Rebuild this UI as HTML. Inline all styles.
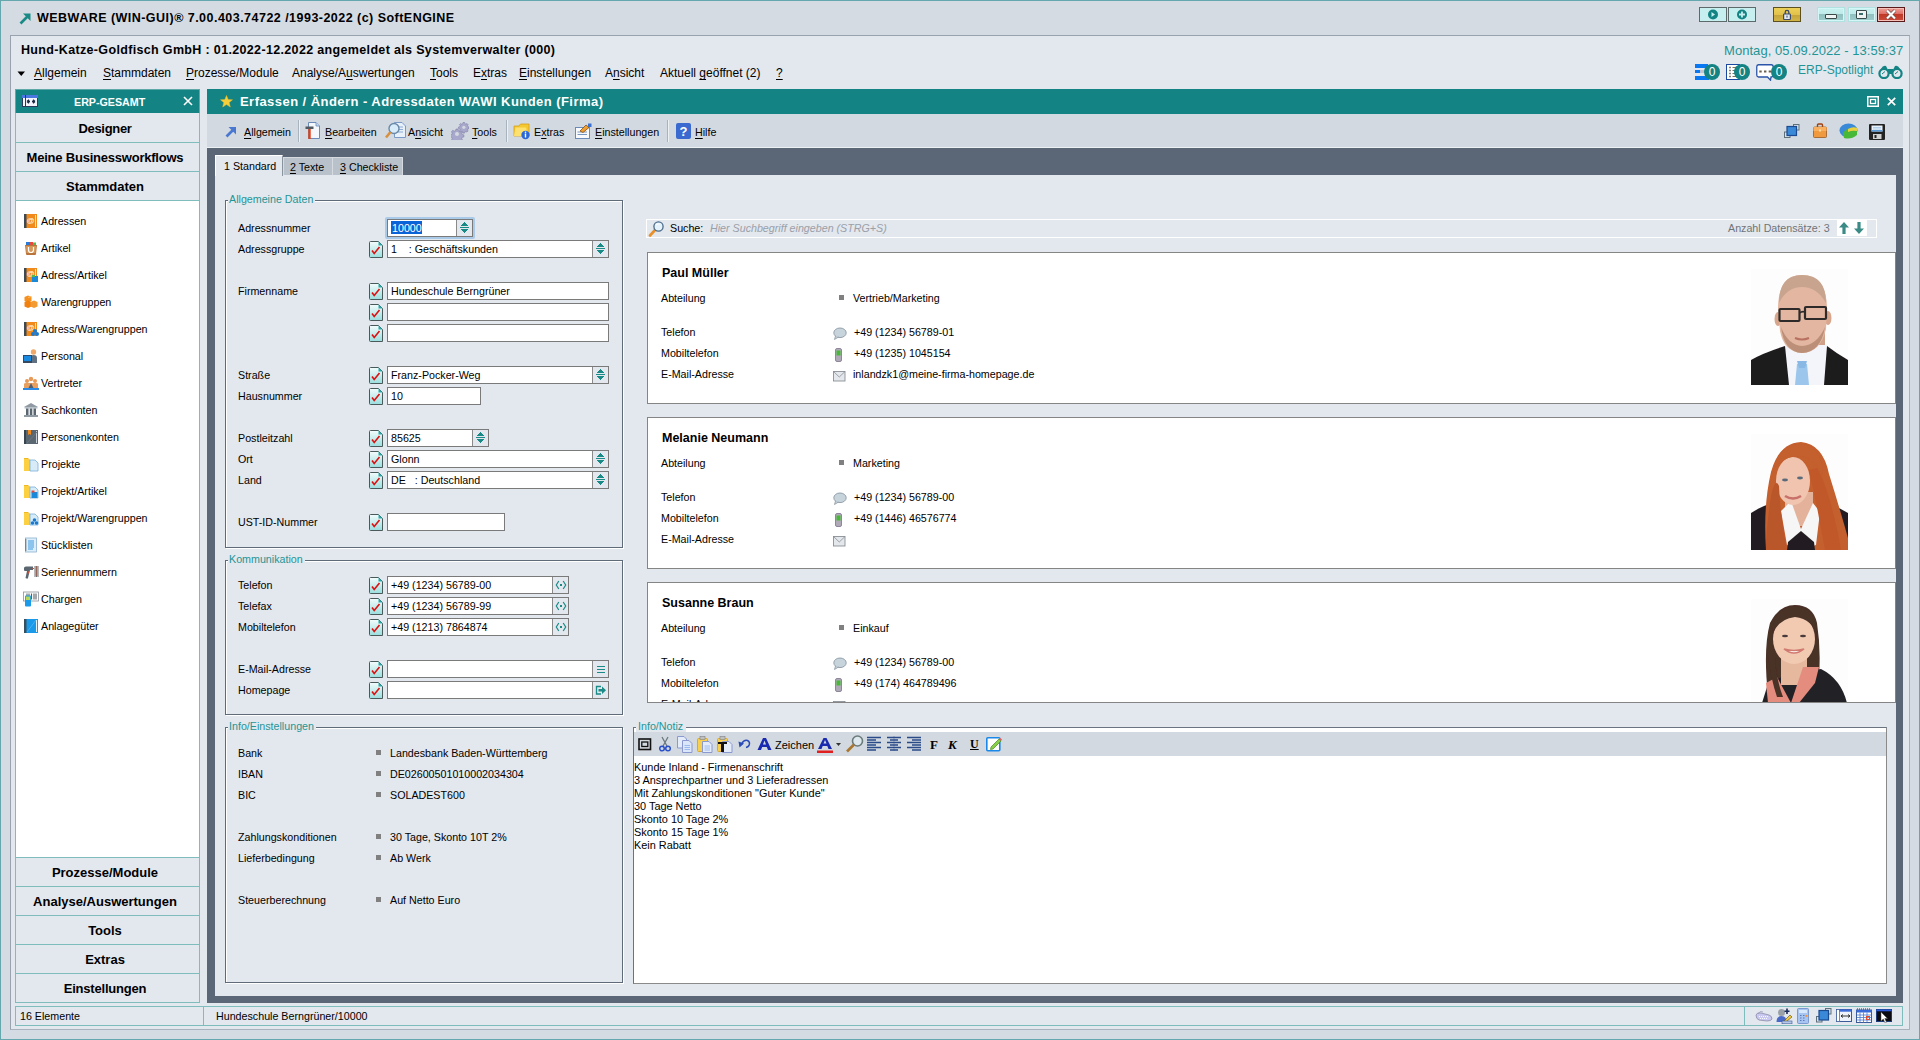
<!DOCTYPE html>
<html><head><meta charset="utf-8">
<style>
*{box-sizing:border-box;margin:0;padding:0}
html,body{width:1920px;height:1040px;overflow:hidden}
body{position:relative;background:#d5dbe2;font-family:"Liberation Sans",sans-serif;font-size:10.7px;color:#000}
.a{position:absolute;white-space:nowrap;line-height:1}
u{text-decoration:underline;text-underline-offset:1.5px;text-decoration-thickness:1px}
.teal{background:#138383}
.wb{position:absolute;top:7px;width:28px;height:15px;border:1px solid #5d6a6c}
.pbtn{position:absolute;left:15px;width:185px;height:29px;border-left:1px solid #7fbcbc;border-right:1px solid #7fbcbc;border-bottom:1px solid #7fbcbc;background:#e3e7ee;font-weight:bold;font-size:13px;text-align:center}
.pbtn span{position:absolute;left:0;right:5px;top:8px;line-height:1}
.badge{position:absolute;width:16px;height:16px;border-radius:8px;background:#138383;color:#fff;font-size:12px;text-align:center;line-height:16px}
.inp{position:absolute;height:18px;border:1px solid #7a7a7a;background:#fff}
.leg{color:#1f9595}
</style></head><body>

<!-- outer teal border -->
<div class="a" style="left:0;top:0;width:1920px;height:1040px;border:1px solid #64a7ad"></div>

<!-- title bar -->
<svg class="a" style="left:19px;top:12px" width="13" height="13" viewBox="0 0 13 13"><path d="M1.5 11.5 L9 4" stroke="#1a8a86" stroke-width="2.6" fill="none"/><path d="M4 1.5 H11.5 V9 Z" fill="#1a8a86"/></svg>
<div class="a" style="left:37px;top:12px;font-weight:bold;font-size:12.5px;letter-spacing:0.47px">WEBWARE (WIN-GUI)® 7.00.403.74722 /1993-2022 (c) SoftENGINE</div>

<!-- window buttons -->
<div class="wb" style="left:1699px;background:#c8efef"><svg width="26" height="13" style="position:absolute;left:0;top:0"><circle cx="13" cy="6.5" r="5" fill="#138383"/><path d="M11.5 4 L15 6.5 L11.5 9 Z" fill="#c8efef"/></svg></div>
<div class="wb" style="left:1728px;background:#c8efef"><svg width="26" height="13" style="position:absolute;left:0;top:0"><circle cx="13" cy="6.5" r="5" fill="#138383"/><path d="M10 6.5 H16 M13 3.5 V9.5" stroke="#c8efef" stroke-width="1.8"/></svg></div>
<div class="wb" style="left:1773px;width:28px;background:linear-gradient(#ecd058 0%,#e2c24a 50%,#c4a43a 51%,#d2b446 100%);border-color:#5c5020"><svg width="26" height="13" style="position:absolute;left:0;top:0"><path d="M11.2 6 V4.2 A1.8 1.8 0 0 1 14.8 4.2 V6" stroke="#3a4a6a" stroke-width="1.3" fill="none"/><rect x="9.6" y="6" width="6.8" height="5.5" rx="0.8" fill="#e4e8f0" stroke="#3a4a6a" stroke-width="1.2"/><rect x="12.5" y="7.6" width="1" height="2" fill="#3a4a6a"/></svg></div>
<div class="wb" style="left:1817px;background:linear-gradient(#c8f0f0 0%,#c0eaea 45%,#90c0c0 50%,#a0cccc 100%);border-color:#b0e2e2;box-shadow:inset 0 0 0 1px #d4f6f6"><div style="position:absolute;left:7px;top:6px;width:12px;height:5px;background:#eef4f4;border:1.2px solid #3a4848;border-radius:1px"></div></div>
<div class="wb" style="left:1848px;background:linear-gradient(#c8f0f0 0%,#c0eaea 45%,#90c0c0 50%,#a0cccc 100%);border-color:#b0e2e2;box-shadow:inset 0 0 0 1px #d4f6f6"><div style="position:absolute;left:7px;top:2px;width:11px;height:9px;border:1.5px solid #3a4a4a;background:#eef4f4;border-radius:1px"><div style="position:absolute;left:2px;top:2px;width:4px;height:2px;border:1px solid #3a6a6a"></div></div></div>
<div class="wb" style="left:1877px;background:linear-gradient(#eea098 0%,#de7068 45%,#c03828 50%,#cc4a3a 100%);border-color:#5a1a1a;box-shadow:inset 0 0 0 1px #f4c0b8"><svg width="26" height="13" style="position:absolute;left:0;top:0"><path d="M9 2.5 L17 10.5 M17 2.5 L9 10.5" stroke="#6a4a4a" stroke-width="3.4"/><path d="M9 2.5 L17 10.5 M17 2.5 L9 10.5" stroke="#fff" stroke-width="2.2"/></svg></div>

<!-- inner frame -->
<div class="a" style="left:10px;top:35px;width:1900px;height:995px;background:#e3e7ee;border:1px solid #98a3ae;border-right-color:#a9b3bd;border-bottom-color:#a9b3bd"></div>

<!-- company line -->
<div class="a" style="left:21px;top:44px;font-weight:bold;font-size:12.5px;letter-spacing:0.34px">Hund-Katze-Goldfisch GmbH : 01.2022-12.2022 angemeldet als Systemverwalter (000)</div>

<!-- menu -->
<svg class="a" style="left:17px;top:71px" width="9" height="6"><path d="M0.5 0.5 H8 L4.25 5 Z" fill="#000"/></svg>
<div class="a" style="left:34px;top:67px;font-size:12px"><u>A</u>llgemein</div>
<div class="a" style="left:103px;top:67px;font-size:12px"><u>S</u>tammdaten</div>
<div class="a" style="left:186px;top:67px;font-size:12px"><u>P</u>rozesse/Module</div>
<div class="a" style="left:292px;top:67px;font-size:12px">Analyse/A<u>u</u>swertungen</div>
<div class="a" style="left:430px;top:67px;font-size:12px"><u>T</u>ools</div>
<div class="a" style="left:473px;top:67px;font-size:12px">E<u>x</u>tras</div>
<div class="a" style="left:519px;top:67px;font-size:12px"><u>E</u>instellungen</div>
<div class="a" style="left:605px;top:67px;font-size:12px">A<u>n</u>sicht</div>
<div class="a" style="left:660px;top:67px;font-size:12px">Aktuell <u>g</u>eöffnet (2)</div>
<div class="a" style="left:776px;top:67px;font-size:12px"><u>?</u></div>

<!-- date + status icons -->
<div class="a" style="left:1724px;top:44px;font-size:13px;color:#1f9595;letter-spacing:0.05px">Montag, 05.09.2022 - 13:59:37</div>
<div class="a" style="left:1798px;top:64px;font-size:12px;color:#1f9595">ERP-Spotlight</div>
<svg class="a" style="left:1695px;top:64px" width="14" height="16" shape-rendering="crispEdges"><rect x="0" y="0" width="13" height="4" fill="#0a78f0"/><rect x="0" y="6" width="5" height="3" fill="#0a78f0"/><rect x="5" y="6" width="8" height="3" fill="#c0c4d0"/><rect x="0" y="12" width="14" height="4" fill="#0a78f0"/></svg>
<div class="badge" style="left:1704px;top:64px">0</div>
<svg class="a" style="left:1726px;top:64px" width="14" height="16"><rect x="0.5" y="0.5" width="13" height="15" fill="#fff" stroke="#1a48a0"/><path d="M3.5 3.5h1M3.5 6.5h1M3.5 9.5h1M3.5 12.5h1" stroke="#000" stroke-width="1.4"/><path d="M6.5 3.5h5M6.5 6.5h5M6.5 9.5h5M6.5 12.5h5" stroke="#807058" stroke-width="1"/></svg>
<div class="badge" style="left:1734px;top:64px">0</div>
<svg class="a" style="left:1756px;top:64px" width="18" height="17"><path d="M2.5 0.75 H15.5 A2 2 0 0 1 17.25 2.75 V11 A2 2 0 0 1 15.5 13 H15 L14.5 16.2 L11.5 13 H2.5 A2 2 0 0 1 0.75 11 V2.75 A2 2 0 0 1 2.5 0.75Z" fill="#fff" stroke="#2a55a8" stroke-width="1.3"/><path d="M3.3 7.5h2.4M8 7.5h2.4M12.7 7.5h2.4" stroke="#6a6050" stroke-width="2.2"/></svg>
<div class="badge" style="left:1771px;top:64px">0</div>
<svg class="a" style="left:1878px;top:65px" width="25" height="14"><circle cx="6" cy="8.5" r="4.6" fill="none" stroke="#138383" stroke-width="2.2"/><circle cx="19" cy="8.5" r="4.6" fill="none" stroke="#138383" stroke-width="2.2"/><path d="M3 4 Q5 0 8 1 L10 5 H15 L17 1 Q20 0 22 4" fill="#138383"/><rect x="10" y="5" width="5" height="4" fill="#138383"/><path d="M4 9 L7 6.5 M17 9 L20 6.5" stroke="#138383" stroke-width="1"/></svg>

<!-- left panel -->
<div class="a teal" style="left:15px;top:89px;width:185px;height:24px;box-shadow:inset 1px 1px 0 #5fa8a8,inset -1px 0 0 #5fa8a8"></div>
<svg class="a" style="left:22px;top:95px" width="16" height="12"><rect x="0.5" y="0.5" width="15" height="11" fill="#f4f4fc" stroke="#2a3a5a"/><rect x="0" y="0" width="16" height="3" fill="#4a78e0"/><path d="M3.5 0 V12" stroke="#2a3a5a" stroke-width="1"/><path d="M5 6.5 H8 M10 6.5 H13 M5 6.5 L7 4.8 M5 6.5 L7 8.2 M13 6.5 L11 4.8 M13 6.5 L11 8.2" stroke="#1a2a40" stroke-width="1.3"/></svg>
<div class="a" style="left:74px;top:97px;font-weight:bold;font-size:10.7px;color:#fff">ERP-GESAMT</div>
<svg class="a" style="left:183px;top:96px" width="10" height="10"><path d="M1 1 L9 9 M9 1 L1 9" stroke="#fff" stroke-width="1.6"/></svg>
<div class="a" style="left:15px;top:113px;width:185px;height:890px;background:#fff;border:1px solid #7fbcbc;border-top:none"></div>
<div class="pbtn" style="top:113px;height:30px"><span style="top:9px;letter-spacing:-0.3px">Designer</span></div>
<div class="pbtn" style="top:143px"><span style="letter-spacing:-0.22px">Meine Businessworkflows</span></div>
<div class="pbtn" style="top:172px"><span>Stammdaten</span></div>
<div class="pbtn" style="top:857px;height:30px;border-top:1px solid #7fbcbc"><span>Prozesse/Module</span></div>
<div class="pbtn" style="top:887px"><span>Analyse/Auswertungen</span></div>
<div class="pbtn" style="top:916px"><span>Tools</span></div>
<div class="pbtn" style="top:945px"><span>Extras</span></div>
<div class="pbtn" style="top:974px"><span style="letter-spacing:-0.2px">Einstellungen</span></div>
<svg class="a" style="left:23px;top:213px" width="16" height="16" viewBox="0 0 16 16"><rect x="1" y="1" width="13" height="14" fill="#f08a1c"/><rect x="1" y="1" width="2.5" height="14" fill="#3c4a55"/><rect x="12" y="2" width="1" height="12" fill="#fde0b8"/><text x="7.6" y="9.5" font-size="8" fill="#fff" text-anchor="middle" font-family="Liberation Sans">@</text></svg>
<div class="a" style="left:41px;top:216px">Adressen</div>
<svg class="a" style="left:23px;top:240px" width="16" height="16" viewBox="0 0 16 16"><path d="M2 5 L3 14 Q3 15 4 15 H12 Q13 15 13 14 L14 5 Z" fill="#b8743a"/><path d="M3 6 H13 L12.5 13 H3.5Z" fill="#d89858"/><rect x="3" y="2" width="4" height="3" fill="#2a7ad8"/><rect x="7" y="2" width="3" height="3" fill="#e84a3a"/><rect x="10" y="2.5" width="3" height="2.5" fill="#58b848"/><path d="M5.5 7 V10 A2.5 2.5 0 0 0 10.5 10 V7" stroke="#fff" stroke-width="1.2" fill="none"/></svg>
<div class="a" style="left:41px;top:243px">Artikel</div>
<svg class="a" style="left:23px;top:267px" width="16" height="16" viewBox="0 0 16 16"><rect x="1" y="1" width="13" height="14" fill="#f08a1c"/><rect x="1" y="1" width="2.5" height="14" fill="#3c4a55"/><rect x="12" y="2" width="1" height="7" fill="#fde0b8"/><text x="7.6" y="9" font-size="8" fill="#fff" text-anchor="middle" font-family="Liberation Sans">@</text><rect x="9" y="9" width="6" height="6" fill="#1a8ad8"/><rect x="9" y="8" width="3" height="2" fill="#58b848"/></svg>
<div class="a" style="left:41px;top:270px">Adress/Artikel</div>
<svg class="a" style="left:23px;top:294px" width="16" height="16" viewBox="0 0 16 16"><path d="M5 1.5 L8.5 3 V7 L5 8.5 L1.5 7 V3Z" fill="#f5901e"/><path d="M1.5 8 L5 6.5 L8.5 8 V12.5 L5 14 L1.5 12.5Z" fill="#f08010"/><path d="M7.5 8 L11 6.5 L14.5 8 V12.5 L11 14 L7.5 12.5Z" fill="#f39a30"/><path d="M5 3.5 L8.5 2.5" stroke="#ffb860" stroke-width="1"/></svg>
<div class="a" style="left:41px;top:297px">Warengruppen</div>
<svg class="a" style="left:23px;top:321px" width="16" height="16" viewBox="0 0 16 16"><rect x="1" y="1" width="13" height="14" fill="#f08a1c"/><rect x="1" y="1" width="2.5" height="14" fill="#3c4a55"/><rect x="12" y="2" width="1" height="7" fill="#fde0b8"/><text x="7.6" y="9" font-size="8" fill="#fff" text-anchor="middle" font-family="Liberation Sans">@</text><circle cx="12" cy="10" r="2" fill="#1a7ad0"/><circle cx="10" cy="13" r="2" fill="#1a7ad0"/><circle cx="14" cy="13" r="2" fill="#1a7ad0"/></svg>
<div class="a" style="left:41px;top:324px">Adress/Warengruppen</div>
<svg class="a" style="left:23px;top:348px" width="16" height="16" viewBox="0 0 16 16"><circle cx="10.5" cy="4" r="2.7" fill="#f0a868"/><path d="M7 15 V10 Q7 7 10.5 7 Q14 7 14 10 V15Z" fill="#607080"/><rect x="0.5" y="7.5" width="8" height="6" fill="#1a8ae0" stroke="#2a4a70" stroke-width="1"/><rect x="0" y="13.5" width="9" height="1.5" fill="#3a4a5a"/></svg>
<div class="a" style="left:41px;top:351px">Personal</div>
<svg class="a" style="left:23px;top:375px" width="16" height="16" viewBox="0 0 16 16"><circle cx="4" cy="6" r="2" fill="#e89a58"/><circle cx="8" cy="4" r="2.2" fill="#e89a58"/><circle cx="12" cy="6" r="2" fill="#e89a58"/><path d="M1 14 V9 Q1 8 3 8 H13 Q15 8 15 9 V14Z" fill="#e8a060"/><path d="M5 14 L8 8 L11 14Z" fill="#506070"/><rect x="0" y="13" width="16" height="2" fill="#2a8ae8"/></svg>
<div class="a" style="left:41px;top:378px">Vertreter</div>
<svg class="a" style="left:23px;top:402px" width="16" height="16" viewBox="0 0 16 16"><path d="M1 5 L8 1 L15 5Z" fill="#909aa2"/><rect x="1.5" y="5" width="13" height="1.5" fill="#b8c0c8"/><rect x="3" y="6.5" width="2.5" height="6.5" fill="#5a6670"/><rect x="6.8" y="6.5" width="2.5" height="6.5" fill="#5a6670"/><rect x="10.5" y="6.5" width="2.5" height="6.5" fill="#5a6670"/><rect x="1" y="13" width="14" height="2" fill="#909aa2"/></svg>
<div class="a" style="left:41px;top:405px">Sachkonten</div>
<svg class="a" style="left:23px;top:429px" width="16" height="16" viewBox="0 0 16 16"><rect x="1" y="1" width="14" height="14" fill="#5a6670"/><rect x="1" y="1" width="2" height="14" fill="#38444e"/><path d="M5 1 H8 V6 L6.5 5 L5 6Z" fill="#f08a1c"/><rect x="13" y="2" width="1" height="12" fill="#c8d0d8"/><path d="M4 14 L14 3" stroke="#6a7680" stroke-width="1"/></svg>
<div class="a" style="left:41px;top:432px">Personenkonten</div>
<svg class="a" style="left:23px;top:456px" width="16" height="16" viewBox="0 0 16 16"><path d="M1 2 H5 L6 3 V15 H1Z" fill="#f0b820"/><path d="M1 3 H7 V15 H1Z" fill="#fcd040"/><path d="M7 4 H12 L15 7 V15 H7Z" fill="#d8ecf8" stroke="#7ab0d8" stroke-width="0.8"/></svg>
<div class="a" style="left:41px;top:459px">Projekte</div>
<svg class="a" style="left:23px;top:483px" width="16" height="16" viewBox="0 0 16 16"><path d="M1 2 H5 L6 3 V15 H1Z" fill="#f0b820"/><path d="M1 3 H7 V15 H1Z" fill="#fcd040"/><path d="M7 4 H12 L15 7 V15 H7Z" fill="#d8ecf8" stroke="#7ab0d8" stroke-width="0.8"/><rect x="8.5" y="9" width="6" height="6" fill="#1a8ad8"/><rect x="8.5" y="7.5" width="3" height="2" fill="#e84a3a"/></svg>
<div class="a" style="left:41px;top:486px">Projekt/Artikel</div>
<svg class="a" style="left:23px;top:510px" width="16" height="16" viewBox="0 0 16 16"><path d="M1 2 H5 L6 3 V15 H1Z" fill="#f0b820"/><path d="M1 3 H7 V15 H1Z" fill="#fcd040"/><path d="M7 4 H12 L15 7 V15 H7Z" fill="#d8ecf8" stroke="#7ab0d8" stroke-width="0.8"/><circle cx="11.5" cy="10" r="1.8" fill="#1a7ad0"/><circle cx="9.5" cy="13" r="1.8" fill="#1a7ad0"/><circle cx="13.5" cy="13" r="1.8" fill="#1a7ad0"/></svg>
<div class="a" style="left:41px;top:513px">Projekt/Warengruppen</div>
<svg class="a" style="left:23px;top:537px" width="16" height="16" viewBox="0 0 16 16"><rect x="2.5" y="1" width="11" height="14" fill="#dceefa" stroke="#8ab0d0" stroke-width="0.8"/><path d="M5 4 H11 M5 6 H11 M5 8 H11 M5 10 H11 M5 12 H10" stroke="#3a9ae0" stroke-width="1"/><path d="M2 3h1.5M2 5h1.5M2 7h1.5M2 9h1.5M2 11h1.5M2 13h1.5" stroke="#333" stroke-width="0.8"/></svg>
<div class="a" style="left:41px;top:540px">Stücklisten</div>
<svg class="a" style="left:23px;top:564px" width="16" height="16" viewBox="0 0 16 16"><path d="M1 4 Q1 2.5 3 2.5 H10 V6 H7 L5 14 Q4.5 15 3.5 14.5 L2.5 14 L4 7 H2 Q1 7 1 6Z" fill="#5a6670"/><path d="M9.5 4.5 H11" stroke="#e84a2a" stroke-width="1"/><path d="M5 10 L6 7" stroke="#e84a2a" stroke-width="0.8"/><path d="M12 2V13M13.5 2V13M15 2V13" stroke="#333" stroke-width="0.7"/><path d="M12 3h3M12 5h3M12 7h3M12 9h3M12 11h3" stroke="#e84a2a" stroke-width="0.6"/></svg>
<div class="a" style="left:41px;top:567px">Seriennummern</div>
<svg class="a" style="left:23px;top:591px" width="16" height="16" viewBox="0 0 16 16"><rect x="0.5" y="1" width="15" height="9" fill="#fff" stroke="#8a9298" stroke-width="0.8"/><path d="M4 2.5V8.5M6 2.5V8.5M8.5 2.5V8.5M11 2.5V8.5M13 2.5V8.5" stroke="#5a6268" stroke-width="1.1"/><rect x="2" y="4.5" width="6" height="11" rx="1" fill="#1a9ae8"/><rect x="2.8" y="5.5" width="4.4" height="3.5" fill="#b8d858"/></svg>
<div class="a" style="left:41px;top:594px">Chargen</div>
<svg class="a" style="left:23px;top:618px" width="16" height="16" viewBox="0 0 16 16"><rect x="1" y="1" width="14" height="14" fill="#1a9ae8"/><rect x="1" y="1" width="2.5" height="14" fill="#38505e"/><rect x="13" y="2" width="1" height="12" fill="#e8f4fc"/><path d="M4 14 L13 2" stroke="#48b0f0" stroke-width="1"/></svg>
<div class="a" style="left:41px;top:621px">Anlagegüter</div>

<!-- main panel -->
<div class="a teal" style="left:207px;top:89px;width:1696px;height:25px"></div>
<div class="a" style="left:207px;top:114px;width:1696px;height:33px;background:#d3d9e0"></div>
<div class="a" style="left:207px;top:147px;width:1696px;height:1px;background:#eef1f4"></div>
<div class="a" style="left:207px;top:148px;width:1696px;height:855px;background:#5b6777"></div>
<div class="a" style="left:215px;top:175px;width:1681px;height:821px;background:#e3e7ee"></div>
<!--MAIN-->
<svg width="0" height="0" style="position:absolute"><defs><linearGradient id="cg" x1="0" y1="0" x2="0" y2="1"><stop offset="0" stop-color="#f4fcfc"/><stop offset="1" stop-color="#9adede"/></linearGradient><filter id="pb" x="-5%" y="-5%" width="110%" height="110%"><feGaussianBlur stdDeviation="0.45"/></filter></defs></svg>
<div class="a" style="left:215px;top:155px;width:68px;height:21px;background:#e3e7ee;border-top:1px solid #fff;border-left:1px solid #fff;border-right:1px solid #8a949e"></div>
<div class="a" style="left:283px;top:157px;width:50px;height:18px;background:#b9c1ca;border:1px solid #d5dbe1;border-bottom:none"></div>
<div class="a" style="left:332px;top:157px;width:71px;height:18px;background:#b9c1ca;border:1px solid #d5dbe1;border-bottom:none"></div>
<div class="a" style="left:224px;top:161px">1 Standard</div>
<div class="a" style="left:290px;top:162px"><u>2</u> Texte</div>
<div class="a" style="left:340px;top:162px"><u>3</u> Checkliste</div>
<div class="a" style="left:225px;top:200px;width:398px;height:348px;border:1px solid #5f6b78;border-right-color:#5f6b78;box-shadow:inset 1px 1px 0 #fff, 1px 1px 0 #fff"></div>
<div class="a leg" style="left:228px;top:194px;padding:0 2px 0 1px;background:#e3e7ee">Allgemeine Daten</div>
<div class="a" style="left:238px;top:223px">Adressnummer</div>
<div class="a" style="left:238px;top:244px">Adressgruppe</div>
<svg class="a" style="left:369px;top:241px" width="14" height="17" viewBox="0 0 14 17"><path d="M0.5 1.5 Q0.5 0.5 1.5 0.5 H9.5 L13.5 4.5 V16.5 H1.5 Q0.5 16.5 0.5 15.5Z" fill="url(#cg)" stroke="#4a5a5a" stroke-width="1"/><path d="M9.5 0.5 V4.5 H13.5" fill="#2aa8a8"/><path d="M3 9.5 L5.2 12.5 L10.5 6" stroke="#e01010" stroke-width="1.6" fill="none"/></svg>
<div class="a inp" style="left:387px;top:240px;width:222px"><span style="position:absolute;left:3px;top:3px">1&nbsp;&nbsp;&nbsp;&nbsp;: Geschäftskunden</span><div style="position:absolute;right:0;top:0;width:16px;height:16px;border-left:1px solid #8a8a8a;background:#e3e7ee"><svg width="9" height="11" shape-rendering="crispEdges" style="position:absolute;left:3px;top:2px"><path d="M4 0 H5 V1 H6 V2 H7 V3 H8 V4 H1 V3 H2 V2 H3 V1 H4Z M0 5 H9 V6 H0Z M1 7 H8 V8 H7 V9 H6 V10 H5 V11 H4 V10 H3 V9 H2 V8 H1Z" fill="#1a8a86"/></svg></div></div>
<div class="a" style="left:238px;top:286px">Firmenname</div>
<svg class="a" style="left:369px;top:283px" width="14" height="17" viewBox="0 0 14 17"><path d="M0.5 1.5 Q0.5 0.5 1.5 0.5 H9.5 L13.5 4.5 V16.5 H1.5 Q0.5 16.5 0.5 15.5Z" fill="url(#cg)" stroke="#4a5a5a" stroke-width="1"/><path d="M9.5 0.5 V4.5 H13.5" fill="#2aa8a8"/><path d="M3 9.5 L5.2 12.5 L10.5 6" stroke="#e01010" stroke-width="1.6" fill="none"/></svg>
<div class="a inp" style="left:387px;top:282px;width:222px"><span style="position:absolute;left:3px;top:3px">Hundeschule Berngrüner</span></div>
<svg class="a" style="left:369px;top:304px" width="14" height="17" viewBox="0 0 14 17"><path d="M0.5 1.5 Q0.5 0.5 1.5 0.5 H9.5 L13.5 4.5 V16.5 H1.5 Q0.5 16.5 0.5 15.5Z" fill="url(#cg)" stroke="#4a5a5a" stroke-width="1"/><path d="M9.5 0.5 V4.5 H13.5" fill="#2aa8a8"/><path d="M3 9.5 L5.2 12.5 L10.5 6" stroke="#e01010" stroke-width="1.6" fill="none"/></svg>
<div class="a inp" style="left:387px;top:303px;width:222px"><span style="position:absolute;left:3px;top:3px"></span></div>
<svg class="a" style="left:369px;top:325px" width="14" height="17" viewBox="0 0 14 17"><path d="M0.5 1.5 Q0.5 0.5 1.5 0.5 H9.5 L13.5 4.5 V16.5 H1.5 Q0.5 16.5 0.5 15.5Z" fill="url(#cg)" stroke="#4a5a5a" stroke-width="1"/><path d="M9.5 0.5 V4.5 H13.5" fill="#2aa8a8"/><path d="M3 9.5 L5.2 12.5 L10.5 6" stroke="#e01010" stroke-width="1.6" fill="none"/></svg>
<div class="a inp" style="left:387px;top:324px;width:222px"><span style="position:absolute;left:3px;top:3px"></span></div>
<div class="a" style="left:238px;top:370px">Straße</div>
<svg class="a" style="left:369px;top:367px" width="14" height="17" viewBox="0 0 14 17"><path d="M0.5 1.5 Q0.5 0.5 1.5 0.5 H9.5 L13.5 4.5 V16.5 H1.5 Q0.5 16.5 0.5 15.5Z" fill="url(#cg)" stroke="#4a5a5a" stroke-width="1"/><path d="M9.5 0.5 V4.5 H13.5" fill="#2aa8a8"/><path d="M3 9.5 L5.2 12.5 L10.5 6" stroke="#e01010" stroke-width="1.6" fill="none"/></svg>
<div class="a inp" style="left:387px;top:366px;width:222px"><span style="position:absolute;left:3px;top:3px">Franz-Pocker-Weg</span><div style="position:absolute;right:0;top:0;width:16px;height:16px;border-left:1px solid #8a8a8a;background:#e3e7ee"><svg width="9" height="11" shape-rendering="crispEdges" style="position:absolute;left:3px;top:2px"><path d="M4 0 H5 V1 H6 V2 H7 V3 H8 V4 H1 V3 H2 V2 H3 V1 H4Z M0 5 H9 V6 H0Z M1 7 H8 V8 H7 V9 H6 V10 H5 V11 H4 V10 H3 V9 H2 V8 H1Z" fill="#1a8a86"/></svg></div></div>
<div class="a" style="left:238px;top:391px">Hausnummer</div>
<svg class="a" style="left:369px;top:388px" width="14" height="17" viewBox="0 0 14 17"><path d="M0.5 1.5 Q0.5 0.5 1.5 0.5 H9.5 L13.5 4.5 V16.5 H1.5 Q0.5 16.5 0.5 15.5Z" fill="url(#cg)" stroke="#4a5a5a" stroke-width="1"/><path d="M9.5 0.5 V4.5 H13.5" fill="#2aa8a8"/><path d="M3 9.5 L5.2 12.5 L10.5 6" stroke="#e01010" stroke-width="1.6" fill="none"/></svg>
<div class="a inp" style="left:387px;top:387px;width:94px"><span style="position:absolute;left:3px;top:3px">10</span></div>
<div class="a" style="left:238px;top:433px">Postleitzahl</div>
<svg class="a" style="left:369px;top:430px" width="14" height="17" viewBox="0 0 14 17"><path d="M0.5 1.5 Q0.5 0.5 1.5 0.5 H9.5 L13.5 4.5 V16.5 H1.5 Q0.5 16.5 0.5 15.5Z" fill="url(#cg)" stroke="#4a5a5a" stroke-width="1"/><path d="M9.5 0.5 V4.5 H13.5" fill="#2aa8a8"/><path d="M3 9.5 L5.2 12.5 L10.5 6" stroke="#e01010" stroke-width="1.6" fill="none"/></svg>
<div class="a inp" style="left:387px;top:429px;width:102px"><span style="position:absolute;left:3px;top:3px">85625</span><div style="position:absolute;right:0;top:0;width:16px;height:16px;border-left:1px solid #8a8a8a;background:#e3e7ee"><svg width="9" height="11" shape-rendering="crispEdges" style="position:absolute;left:3px;top:2px"><path d="M4 0 H5 V1 H6 V2 H7 V3 H8 V4 H1 V3 H2 V2 H3 V1 H4Z M0 5 H9 V6 H0Z M1 7 H8 V8 H7 V9 H6 V10 H5 V11 H4 V10 H3 V9 H2 V8 H1Z" fill="#1a8a86"/></svg></div></div>
<div class="a" style="left:238px;top:454px">Ort</div>
<svg class="a" style="left:369px;top:451px" width="14" height="17" viewBox="0 0 14 17"><path d="M0.5 1.5 Q0.5 0.5 1.5 0.5 H9.5 L13.5 4.5 V16.5 H1.5 Q0.5 16.5 0.5 15.5Z" fill="url(#cg)" stroke="#4a5a5a" stroke-width="1"/><path d="M9.5 0.5 V4.5 H13.5" fill="#2aa8a8"/><path d="M3 9.5 L5.2 12.5 L10.5 6" stroke="#e01010" stroke-width="1.6" fill="none"/></svg>
<div class="a inp" style="left:387px;top:450px;width:222px"><span style="position:absolute;left:3px;top:3px">Glonn</span><div style="position:absolute;right:0;top:0;width:16px;height:16px;border-left:1px solid #8a8a8a;background:#e3e7ee"><svg width="9" height="11" shape-rendering="crispEdges" style="position:absolute;left:3px;top:2px"><path d="M4 0 H5 V1 H6 V2 H7 V3 H8 V4 H1 V3 H2 V2 H3 V1 H4Z M0 5 H9 V6 H0Z M1 7 H8 V8 H7 V9 H6 V10 H5 V11 H4 V10 H3 V9 H2 V8 H1Z" fill="#1a8a86"/></svg></div></div>
<div class="a" style="left:238px;top:475px">Land</div>
<svg class="a" style="left:369px;top:472px" width="14" height="17" viewBox="0 0 14 17"><path d="M0.5 1.5 Q0.5 0.5 1.5 0.5 H9.5 L13.5 4.5 V16.5 H1.5 Q0.5 16.5 0.5 15.5Z" fill="url(#cg)" stroke="#4a5a5a" stroke-width="1"/><path d="M9.5 0.5 V4.5 H13.5" fill="#2aa8a8"/><path d="M3 9.5 L5.2 12.5 L10.5 6" stroke="#e01010" stroke-width="1.6" fill="none"/></svg>
<div class="a inp" style="left:387px;top:471px;width:222px"><span style="position:absolute;left:3px;top:3px">DE&nbsp;&nbsp;&nbsp;: Deutschland</span><div style="position:absolute;right:0;top:0;width:16px;height:16px;border-left:1px solid #8a8a8a;background:#e3e7ee"><svg width="9" height="11" shape-rendering="crispEdges" style="position:absolute;left:3px;top:2px"><path d="M4 0 H5 V1 H6 V2 H7 V3 H8 V4 H1 V3 H2 V2 H3 V1 H4Z M0 5 H9 V6 H0Z M1 7 H8 V8 H7 V9 H6 V10 H5 V11 H4 V10 H3 V9 H2 V8 H1Z" fill="#1a8a86"/></svg></div></div>
<div class="a" style="left:238px;top:517px">UST-ID-Nummer</div>
<svg class="a" style="left:369px;top:514px" width="14" height="17" viewBox="0 0 14 17"><path d="M0.5 1.5 Q0.5 0.5 1.5 0.5 H9.5 L13.5 4.5 V16.5 H1.5 Q0.5 16.5 0.5 15.5Z" fill="url(#cg)" stroke="#4a5a5a" stroke-width="1"/><path d="M9.5 0.5 V4.5 H13.5" fill="#2aa8a8"/><path d="M3 9.5 L5.2 12.5 L10.5 6" stroke="#e01010" stroke-width="1.6" fill="none"/></svg>
<div class="a inp" style="left:387px;top:513px;width:118px"><span style="position:absolute;left:3px;top:3px"></span></div>
<div class="a" style="left:385px;top:217px;width:90px;height:22px;border:2px solid #a9cbe9;border-radius:2px"></div>
<div class="a inp" style="left:387px;top:219px;width:86px"><span style="position:absolute;left:3px;top:1px;width:31px;height:13px;background:#0a64d8"></span><span style="position:absolute;left:4px;top:3px;color:#fff">10000</span><div style="position:absolute;right:0;top:0;width:16px;height:16px;border-left:1px solid #8a8a8a;background:#e3e7ee"><svg width="9" height="11" shape-rendering="crispEdges" style="position:absolute;left:3px;top:2px"><path d="M4 0 H5 V1 H6 V2 H7 V3 H8 V4 H1 V3 H2 V2 H3 V1 H4Z M0 5 H9 V6 H0Z M1 7 H8 V8 H7 V9 H6 V10 H5 V11 H4 V10 H3 V9 H2 V8 H1Z" fill="#1a8a86"/></svg></div></div>
<div class="a" style="left:225px;top:560px;width:398px;height:155px;border:1px solid #5f6b78;border-right-color:#5f6b78;box-shadow:inset 1px 1px 0 #fff, 1px 1px 0 #fff"></div>
<div class="a leg" style="left:228px;top:554px;padding:0 2px 0 1px;background:#e3e7ee">Kommunikation</div>
<div class="a" style="left:238px;top:580px">Telefon</div>
<svg class="a" style="left:369px;top:577px" width="14" height="17" viewBox="0 0 14 17"><path d="M0.5 1.5 Q0.5 0.5 1.5 0.5 H9.5 L13.5 4.5 V16.5 H1.5 Q0.5 16.5 0.5 15.5Z" fill="url(#cg)" stroke="#4a5a5a" stroke-width="1"/><path d="M9.5 0.5 V4.5 H13.5" fill="#2aa8a8"/><path d="M3 9.5 L5.2 12.5 L10.5 6" stroke="#e01010" stroke-width="1.6" fill="none"/></svg>
<div class="a inp" style="left:387px;top:576px;width:182px"><span style="position:absolute;left:3px;top:3px">+49 (1234) 56789-00</span><div style="position:absolute;right:0;top:0;width:16px;height:16px;border-left:1px solid #8a8a8a;background:#e3e7ee"><svg width="12" height="12" style="position:absolute;left:2px;top:2px"><path d="M3.8 2 L1.3 6 L3.8 10 M8.2 2 L10.7 6 L8.2 10" stroke="#1a8a86" stroke-width="1.2" fill="none"/><rect x="5" y="5" width="2" height="2" fill="#1a8a86"/></svg></div></div>
<div class="a" style="left:238px;top:601px">Telefax</div>
<svg class="a" style="left:369px;top:598px" width="14" height="17" viewBox="0 0 14 17"><path d="M0.5 1.5 Q0.5 0.5 1.5 0.5 H9.5 L13.5 4.5 V16.5 H1.5 Q0.5 16.5 0.5 15.5Z" fill="url(#cg)" stroke="#4a5a5a" stroke-width="1"/><path d="M9.5 0.5 V4.5 H13.5" fill="#2aa8a8"/><path d="M3 9.5 L5.2 12.5 L10.5 6" stroke="#e01010" stroke-width="1.6" fill="none"/></svg>
<div class="a inp" style="left:387px;top:597px;width:182px"><span style="position:absolute;left:3px;top:3px">+49 (1234) 56789-99</span><div style="position:absolute;right:0;top:0;width:16px;height:16px;border-left:1px solid #8a8a8a;background:#e3e7ee"><svg width="12" height="12" style="position:absolute;left:2px;top:2px"><path d="M3.8 2 L1.3 6 L3.8 10 M8.2 2 L10.7 6 L8.2 10" stroke="#1a8a86" stroke-width="1.2" fill="none"/><rect x="5" y="5" width="2" height="2" fill="#1a8a86"/></svg></div></div>
<div class="a" style="left:238px;top:622px">Mobiltelefon</div>
<svg class="a" style="left:369px;top:619px" width="14" height="17" viewBox="0 0 14 17"><path d="M0.5 1.5 Q0.5 0.5 1.5 0.5 H9.5 L13.5 4.5 V16.5 H1.5 Q0.5 16.5 0.5 15.5Z" fill="url(#cg)" stroke="#4a5a5a" stroke-width="1"/><path d="M9.5 0.5 V4.5 H13.5" fill="#2aa8a8"/><path d="M3 9.5 L5.2 12.5 L10.5 6" stroke="#e01010" stroke-width="1.6" fill="none"/></svg>
<div class="a inp" style="left:387px;top:618px;width:182px"><span style="position:absolute;left:3px;top:3px">+49 (1213) 7864874</span><div style="position:absolute;right:0;top:0;width:16px;height:16px;border-left:1px solid #8a8a8a;background:#e3e7ee"><svg width="12" height="12" style="position:absolute;left:2px;top:2px"><path d="M3.8 2 L1.3 6 L3.8 10 M8.2 2 L10.7 6 L8.2 10" stroke="#1a8a86" stroke-width="1.2" fill="none"/><rect x="5" y="5" width="2" height="2" fill="#1a8a86"/></svg></div></div>
<div class="a" style="left:238px;top:664px">E-Mail-Adresse</div>
<svg class="a" style="left:369px;top:661px" width="14" height="17" viewBox="0 0 14 17"><path d="M0.5 1.5 Q0.5 0.5 1.5 0.5 H9.5 L13.5 4.5 V16.5 H1.5 Q0.5 16.5 0.5 15.5Z" fill="url(#cg)" stroke="#4a5a5a" stroke-width="1"/><path d="M9.5 0.5 V4.5 H13.5" fill="#2aa8a8"/><path d="M3 9.5 L5.2 12.5 L10.5 6" stroke="#e01010" stroke-width="1.6" fill="none"/></svg>
<div class="a inp" style="left:387px;top:660px;width:222px"><span style="position:absolute;left:3px;top:3px"></span><div style="position:absolute;right:0;top:0;width:16px;height:16px;border-left:1px solid #8a8a8a;background:#e3e7ee"><svg width="12" height="12" style="position:absolute;left:2px;top:2px"><path d="M2 3.5 H10 M2 6.5 H10 M2 9.5 H10" stroke="#1a8a86" stroke-width="1"/></svg></div></div>
<div class="a" style="left:238px;top:685px">Homepage</div>
<svg class="a" style="left:369px;top:682px" width="14" height="17" viewBox="0 0 14 17"><path d="M0.5 1.5 Q0.5 0.5 1.5 0.5 H9.5 L13.5 4.5 V16.5 H1.5 Q0.5 16.5 0.5 15.5Z" fill="url(#cg)" stroke="#4a5a5a" stroke-width="1"/><path d="M9.5 0.5 V4.5 H13.5" fill="#2aa8a8"/><path d="M3 9.5 L5.2 12.5 L10.5 6" stroke="#e01010" stroke-width="1.6" fill="none"/></svg>
<div class="a inp" style="left:387px;top:681px;width:222px"><span style="position:absolute;left:3px;top:3px"></span><div style="position:absolute;right:0;top:0;width:16px;height:16px;border-left:1px solid #8a8a8a;background:#e3e7ee"><svg width="12" height="12" style="position:absolute;left:2px;top:2px"><path d="M6 2.5 H1.5 V10 H6" stroke="#1a8a86" stroke-width="1.3" fill="none"/><path d="M3.5 5 H7 V2.5 L11 6.2 L7 10 V7.5 H3.5Z" fill="#1a8a86"/></svg></div></div>
<div class="a" style="left:225px;top:727px;width:398px;height:256px;border:1px solid #5f6b78;border-right-color:#5f6b78;box-shadow:inset 1px 1px 0 #fff, 1px 1px 0 #fff"></div>
<div class="a leg" style="left:228px;top:721px;padding:0 2px 0 1px;background:#e3e7ee">Info/Einstellungen</div>
<div class="a" style="left:238px;top:748px">Bank</div>
<div class="a" style="left:376px;top:750px;width:5px;height:5px;background:#808080"></div>
<div class="a" style="left:390px;top:748px">Landesbank Baden-Württemberg</div>
<div class="a" style="left:238px;top:769px">IBAN</div>
<div class="a" style="left:376px;top:771px;width:5px;height:5px;background:#808080"></div>
<div class="a" style="left:390px;top:769px">DE02600501010002034304</div>
<div class="a" style="left:238px;top:790px">BIC</div>
<div class="a" style="left:376px;top:792px;width:5px;height:5px;background:#808080"></div>
<div class="a" style="left:390px;top:790px">SOLADEST600</div>
<div class="a" style="left:238px;top:832px">Zahlungskonditionen</div>
<div class="a" style="left:376px;top:834px;width:5px;height:5px;background:#808080"></div>
<div class="a" style="left:390px;top:832px">30 Tage, Skonto 10T 2%</div>
<div class="a" style="left:238px;top:853px">Lieferbedingung</div>
<div class="a" style="left:376px;top:855px;width:5px;height:5px;background:#808080"></div>
<div class="a" style="left:390px;top:853px">Ab Werk</div>
<div class="a" style="left:238px;top:895px">Steuerberechnung</div>
<div class="a" style="left:376px;top:897px;width:5px;height:5px;background:#808080"></div>
<div class="a" style="left:390px;top:895px">Auf Netto Euro</div>
<svg class="a" style="left:220px;top:95px" width="13" height="13" viewBox="0 0 13 13"><path d="M6.5 0.5 L8.2 4.6 L12.5 4.8 L9.2 7.6 L10.3 12 L6.5 9.5 L2.7 12 L3.8 7.6 L0.5 4.8 L4.8 4.6Z" fill="#f5cf3a" stroke="#e8b820" stroke-width="0.5"/></svg>
<div class="a" style="left:240px;top:95px;font-weight:bold;font-size:13px;letter-spacing:0.45px;color:#fff">Erfassen / Ändern - Adressdaten WAWI Kunden (Firma)</div>
<svg class="a" style="left:1867px;top:96px" width="12" height="11"><rect x="0.75" y="0.75" width="10.5" height="9.5" fill="none" stroke="#fff" stroke-width="1.5"/><rect x="3.5" y="3.5" width="5" height="4" fill="none" stroke="#fff" stroke-width="1.3"/></svg>
<svg class="a" style="left:1887px;top:97px" width="9" height="9"><path d="M0.8 0.8 L8.2 8.2 M8.2 0.8 L0.8 8.2" stroke="#fff" stroke-width="1.7"/></svg>
<svg class="a" style="left:225px;top:126px" width="12" height="12"><path d="M1.5 10.5 L8 4" stroke="#4a78d0" stroke-width="2.6"/><path d="M3.5 1 H11 V8.5Z" fill="#4a78d0"/></svg>
<div class="a" style="left:244px;top:127px"><u>A</u>llgemein</div>
<div class="a" style="left:298px;top:120px;width:2px;height:22px;background:#a9b3bd;border-right:1px solid #eef1f4"></div>
<div class="a" style="left:506px;top:120px;width:2px;height:22px;background:#a9b3bd;border-right:1px solid #eef1f4"></div>
<div class="a" style="left:667px;top:120px;width:2px;height:22px;background:#a9b3bd;border-right:1px solid #eef1f4"></div>
<svg class="a" style="left:305px;top:122px" width="16" height="18"><path d="M3.5 0.5 H11 L14.5 4 V16.5 H3.5Z" fill="#f4f8fc" stroke="#6a8ab8" stroke-width="1"/><path d="M11 0.5 V4 H14.5" fill="#c8d8f0" stroke="#6a8ab8" stroke-width="0.8"/><path d="M0.5 4.5 H8.5 V7 H0.5Z" fill="#505860"/><rect x="3.3" y="7" width="2.4" height="10" fill="#e04018"/></svg>
<div class="a" style="left:325px;top:127px"><u>B</u>earbeiten</div>
<svg class="a" style="left:385px;top:122px" width="21" height="18"><path d="M9.5 0.5 H17 L20.5 4 V15.5 H9.5Z" fill="#e8f0fa" stroke="#7a9ac8" stroke-width="1"/><path d="M12 5 H18 M12 7.5 H18 M12 10 H18" stroke="#7a9ac8" stroke-width="0.8"/><circle cx="9" cy="6.5" r="5" fill="#d8ecfa" stroke="#6a8aa8" stroke-width="1.4"/><path d="M5.5 10 L1 15.5" stroke="#d89040" stroke-width="2.6"/></svg>
<div class="a" style="left:408px;top:127px">A<u>n</u>sicht</div>
<svg class="a" style="left:451px;top:122px" width="18" height="18"><g fill="#a8a8cc" stroke="#8080a8" stroke-width="0.6"><path d="M5 7 h2 l0.4 1.6 1.4 0.6 1.4 -0.9 1.4 1.4 -0.9 1.4 0.6 1.4 1.6 0.4 v2 l-1.6 0.4 -0.6 1.4 0.9 1.4 -1.4 1.4 -1.4 -0.9 -1.4 0.6 -0.4 1.6 h-2 l-0.4 -1.6 -1.4 -0.6 -1.4 0.9 -1.4 -1.4 0.9 -1.4 -0.6 -1.4 -1.6 -0.4 v-2 l1.6 -0.4 0.6 -1.4 -0.9 -1.4 1.4 -1.4 1.4 0.9 1.4 -0.6Z"/><path d="M12 0.5 h1.6 l0.3 1.2 1 0.5 1.1 -0.7 1.1 1.1 -0.7 1.1 0.5 1 1.2 0.3 v1.6 l-1.2 0.3 -0.5 1 0.7 1.1 -1.1 1.1 -1.1 -0.7 -1 0.5 -0.3 1.2 h-1.6 l-0.3 -1.2 -1 -0.5 -1.1 0.7 -1.1 -1.1 0.7 -1.1 -0.5 -1 -1.2 -0.3 v-1.6 l1.2 -0.3 0.5 -1 -0.7 -1.1 1.1 -1.1 1.1 0.7 1 -0.5Z"/></g><circle cx="6" cy="12" r="2" fill="#d3d9e0"/><circle cx="12.8" cy="5.3" r="1.6" fill="#d3d9e0"/></svg>
<div class="a" style="left:472px;top:127px"><u>T</u>ools</div>
<svg class="a" style="left:513px;top:122px" width="18" height="18"><path d="M1 4 H6 L7.5 2 H16 V14 H1Z" fill="#f4c830" stroke="#d8a020" stroke-width="0.8"/><path d="M2.5 5.5 H13 L15 14 H1Z" fill="#fce070"/><circle cx="12.5" cy="13" r="4.2" fill="#2a68d8"/><rect x="11.8" y="11.5" width="1.4" height="4" fill="#fff"/><rect x="11.8" y="9.6" width="1.4" height="1.3" fill="#fff"/></svg>
<div class="a" style="left:534px;top:127px">E<u>x</u>tras</div>
<svg class="a" style="left:575px;top:123px" width="17" height="16"><rect x="0.5" y="4.5" width="14" height="11" fill="#f8fafc" stroke="#6a8ab8" stroke-width="1"/><path d="M2.5 9 H12 M2.5 11.5 H12" stroke="#6a8ab8" stroke-width="0.9"/><path d="M5 8 L11 2 L14 4.5 L8 9.5Z" fill="#f0a030" stroke="#8a5010" stroke-width="0.8"/><rect x="13" y="0.5" width="3.5" height="3.5" fill="#3a70d0"/></svg>
<div class="a" style="left:595px;top:127px"><u>E</u>instellungen</div>
<svg class="a" style="left:676px;top:123px" width="15" height="16"><rect x="0" y="0" width="15" height="16" rx="2" fill="#3a6ad0"/><text x="7.5" y="13" font-size="13" font-weight="bold" fill="#fff" text-anchor="middle" font-family="Liberation Sans">?</text></svg>
<div class="a" style="left:695px;top:127px"><u>H</u>ilfe</div>
<svg class="a" style="left:1784px;top:124px" width="16" height="14"><rect x="9.5" y="0.5" width="5.5" height="5.5" fill="#d8e0e8" stroke="#60707a" stroke-width="1"/><rect x="0.5" y="8" width="5.5" height="5.5" fill="#d8e0e8" stroke="#60707a" stroke-width="1"/><rect x="3" y="2.5" width="9.5" height="9" fill="#3a88d8" stroke="#1a4a90" stroke-width="1.2"/></svg>
<svg class="a" style="left:1813px;top:123px" width="14" height="15"><path d="M4.5 4 V2 Q4.5 1 5.5 1 H8.5 Q9.5 1 9.5 2 V4" stroke="#a04010" stroke-width="1.4" fill="none"/><rect x="0.5" y="4" width="13" height="10.5" rx="1" fill="#f09a40" stroke="#9a5a20" stroke-width="0.8"/><rect x="0.5" y="4" width="13" height="4" fill="#f8b060"/><rect x="6" y="6.5" width="2" height="2" fill="#fce0a0"/></svg>
<svg class="a" style="left:1839px;top:123px" width="19" height="17"><ellipse cx="9.5" cy="7.5" rx="9" ry="7" fill="#3a8ad8"/><path d="M4 10 Q8 4 18 5 V12 Q12 17 5 15Z" fill="#48b838"/><path d="M9 6 Q14 3 18 5 V8 Q13 7 9 9Z" fill="#e8d040"/></svg>
<svg class="a" style="left:1869px;top:124px" width="16" height="16"><rect x="0" y="0" width="16" height="16" rx="1" fill="#222"/><rect x="2.5" y="1.5" width="11" height="6" fill="#eaf2fa"/><rect x="2.5" y="6" width="11" height="1.5" fill="#5a9ad8"/><path d="M4 3.5 H12 M4 5 H12" stroke="#8ab8e0" stroke-width="0.6"/><rect x="4" y="10" width="8.5" height="5" fill="#d0d0d0"/><rect x="5.5" y="11" width="2" height="3" fill="#222"/></svg>
<div class="a" style="left:646px;top:219px;width:1231px;height:19px;border:1px solid #fff"></div>
<svg class="a" style="left:648px;top:221px" width="17" height="16"><path d="M7.5 8.5 L2 14.5" stroke="#e8902a" stroke-width="2.6" stroke-linecap="round"/><circle cx="10.5" cy="5.5" r="4.6" fill="#e4f2fc" stroke="#4a6a88" stroke-width="1.3"/><path d="M8 4 Q9.5 2.5 11.5 3" stroke="#fff" stroke-width="1" fill="none"/></svg>
<div class="a" style="left:670px;top:223px">Suche:</div>
<div class="a" style="left:710px;top:223px;font-style:italic;color:#9aa0a8">Hier Suchbegriff eingeben (STRG+S)</div>
<div class="a" style="left:1728px;top:223px;color:#707478">Anzahl Datensätze: 3</div>
<div class="a" style="left:1837px;top:220px;width:30px;height:16px;background:#fff"></div>
<svg class="a" style="left:1837px;top:221px" width="30" height="14"><path d="M7 1 L12 6.5 H8.6 V13 H5.4 V6.5 H2Z" fill="#3a8a86"/><path d="M22 13 L27 7.5 H23.6 V1 H20.4 V7.5 H17Z" fill="#3a8a86"/></svg>
<div class="a" style="left:647px;top:245px;width:1249px;height:458px;overflow:hidden">
<div class="a" style="left:0;top:7px;width:1249px;height:152px;background:#fff;border:1px solid #858585"></div>
<div class="a" style="left:15px;top:22px;font-weight:bold;font-size:12.5px">Paul Müller</div>
<div class="a" style="left:14px;top:48px">Abteilung</div>
<div class="a" style="left:14px;top:82px">Telefon</div>
<div class="a" style="left:14px;top:103px">Mobiltelefon</div>
<div class="a" style="left:14px;top:124px">E-Mail-Adresse</div>
<div class="a" style="left:192px;top:50px;width:5px;height:5px;background:#808080"></div>
<div class="a" style="left:206px;top:48px">Vertrieb/Marketing</div>
<svg class="a" style="left:186px;top:82px" width="14" height="14"><ellipse cx="7" cy="5.8" rx="6.2" ry="4.8" fill="#c8d4dc" stroke="#8a98a4" stroke-width="0.9"/><path d="M2.5 9 L1.5 12.5 L5.5 10" fill="#c8d4dc" stroke="#8a98a4" stroke-width="0.8"/></svg>
<div class="a" style="left:207px;top:82px">+49 (1234) 56789-01</div>
<svg class="a" style="left:188px;top:103px" width="7" height="14"><rect x="0.5" y="0.5" width="6" height="13" rx="1.5" fill="#b0aab8" stroke="#7a7488" stroke-width="0.8"/><rect x="1.5" y="2.5" width="4" height="5" fill="#48b838"/></svg>
<div class="a" style="left:207px;top:103px">+49 (1235) 1045154</div>
<svg class="a" style="left:186px;top:125px" width="13" height="12"><rect x="0.5" y="1.5" width="11.5" height="9.5" fill="#e4e8ec" stroke="#8a9098" stroke-width="0.9"/><path d="M0.5 1.5 L6.25 7 L12 1.5" fill="none" stroke="#8a9098" stroke-width="0.8"/></svg>
<div class="a" style="left:206px;top:124px">inlandzk1@meine-firma-homepage.de</div>
<svg class="a" style="left:1104px;top:24px" width="97" height="116" viewBox="0 0 97 116">
<rect width="97" height="116" fill="#fdfdfd"/>
<g filter="url(#pb)">
<rect x="36" y="64" width="38" height="20" fill="#d0a088"/>
<rect x="34" y="76" width="43" height="40" fill="#f3f5fa"/>
<path d="M0 91 Q12 84 34 77 L38 116 H0Z" fill="#1e1a1c"/>
<path d="M97 91 Q85 84 76 77 L73 116 H97Z" fill="#1e1a1c"/>
<path d="M46 95 H56 L58 116 H44Z" fill="#9cc6ec"/><path d="M46 92 H56 L54 99 H48Z" fill="#8ab8e4"/>
<ellipse cx="27" cy="50" rx="3.5" ry="7" fill="#d8a68c"/><ellipse cx="77" cy="49" rx="3.5" ry="7" fill="#d8a68c"/>
<path d="M27 40 Q27 6 51 6 Q76 6 76 40 L75 60 Q70 83 51 84 Q33 83 29 62Z" fill="#e2b6a0"/>
<path d="M28 34 Q28 6 51 6 Q75 6 75 34 Q66 18 51 18 Q36 18 28 34Z" fill="#c8a48e"/>
<path d="M30 58 Q33 83 51 84 Q70 83 74 58 Q66 76 51 77 Q37 76 30 58Z" fill="#bc9078"/>
<rect x="28.5" y="40" width="20" height="12" rx="1" fill="none" stroke="#2e2a2a" stroke-width="2.2"/>
<rect x="54" y="38" width="21" height="12" rx="1" fill="none" stroke="#2e2a2a" stroke-width="2.2"/>
<path d="M48.5 44 Q51 42 54 43" stroke="#2e2a2a" stroke-width="1.6" fill="none"/>
<path d="M44 69 Q51 72 58 69" stroke="#b87060" stroke-width="2" fill="none"/>
</g></svg>
<div class="a" style="left:0;top:172px;width:1249px;height:152px;background:#fff;border:1px solid #858585"></div>
<div class="a" style="left:15px;top:187px;font-weight:bold;font-size:12.5px">Melanie Neumann</div>
<div class="a" style="left:14px;top:213px">Abteilung</div>
<div class="a" style="left:14px;top:247px">Telefon</div>
<div class="a" style="left:14px;top:268px">Mobiltelefon</div>
<div class="a" style="left:14px;top:289px">E-Mail-Adresse</div>
<div class="a" style="left:192px;top:215px;width:5px;height:5px;background:#808080"></div>
<div class="a" style="left:206px;top:213px">Marketing</div>
<svg class="a" style="left:186px;top:247px" width="14" height="14"><ellipse cx="7" cy="5.8" rx="6.2" ry="4.8" fill="#c8d4dc" stroke="#8a98a4" stroke-width="0.9"/><path d="M2.5 9 L1.5 12.5 L5.5 10" fill="#c8d4dc" stroke="#8a98a4" stroke-width="0.8"/></svg>
<div class="a" style="left:207px;top:247px">+49 (1234) 56789-00</div>
<svg class="a" style="left:188px;top:268px" width="7" height="14"><rect x="0.5" y="0.5" width="6" height="13" rx="1.5" fill="#b0aab8" stroke="#7a7488" stroke-width="0.8"/><rect x="1.5" y="2.5" width="4" height="5" fill="#48b838"/></svg>
<div class="a" style="left:207px;top:268px">+49 (1446) 46576774</div>
<svg class="a" style="left:186px;top:290px" width="13" height="12"><rect x="0.5" y="1.5" width="11.5" height="9.5" fill="#e4e8ec" stroke="#8a9098" stroke-width="0.9"/><path d="M0.5 1.5 L6.25 7 L12 1.5" fill="none" stroke="#8a9098" stroke-width="0.8"/></svg>
<svg class="a" style="left:1104px;top:189px" width="97" height="116" viewBox="0 0 97 116">
<rect width="97" height="116" fill="#fdfdfd"/>
<g filter="url(#pb)">
<path d="M0 116 V79 Q10 72 30 66 H66 Q86 72 97 79 V116Z" fill="#231f21"/>
<path d="M15 116 Q12 72 20 38 Q28 9 50 8 Q72 10 78 40 Q88 72 97 104 V116Z" fill="#c45e2e"/>
<rect x="34" y="58" width="28" height="34" fill="#e4b29a"/>
<path d="M30 77 L40 67 L50 95 L62 69 L69 78 L65 111 L50 116 L36 111Z" fill="#f6f6f6"/>
<path d="M37 108 L50 97 L63 108 L64 116 H36Z" fill="#231f21"/>
<ellipse cx="42" cy="47" rx="17" ry="24" fill="#f0c4ae"/>
<path d="M23 34 Q28 10 50 10 Q72 12 72 42 Q64 24 48 22 Q34 22 23 34Z" fill="#c45e2e"/>
<path d="M58 36 Q64 62 68 84 Q72 104 74 116 H90 Q86 92 78 64 Q72 44 66 34Z" fill="#c0582a"/>
<path d="M15 116 Q16 84 21 58 Q25 44 28 52 Q29 80 36 116Z" fill="#b9562a"/>
<path d="M34 62 Q42 67 50 62" stroke="#c8706a" stroke-width="2.5" fill="none"/>
<ellipse cx="34" cy="46" rx="3" ry="1.4" fill="#5a6a7a"/><ellipse cx="49" cy="44" rx="3" ry="1.4" fill="#5a6a7a"/>
</g></svg>
<div class="a" style="left:0;top:337px;width:1249px;height:152px;background:#fff;border:1px solid #858585"></div>
<div class="a" style="left:15px;top:352px;font-weight:bold;font-size:12.5px">Susanne Braun</div>
<div class="a" style="left:14px;top:378px">Abteilung</div>
<div class="a" style="left:14px;top:412px">Telefon</div>
<div class="a" style="left:14px;top:433px">Mobiltelefon</div>
<div class="a" style="left:14px;top:454px">E-Mail-Adresse</div>
<div class="a" style="left:192px;top:380px;width:5px;height:5px;background:#808080"></div>
<div class="a" style="left:206px;top:378px">Einkauf</div>
<svg class="a" style="left:186px;top:412px" width="14" height="14"><ellipse cx="7" cy="5.8" rx="6.2" ry="4.8" fill="#c8d4dc" stroke="#8a98a4" stroke-width="0.9"/><path d="M2.5 9 L1.5 12.5 L5.5 10" fill="#c8d4dc" stroke="#8a98a4" stroke-width="0.8"/></svg>
<div class="a" style="left:207px;top:412px">+49 (1234) 56789-00</div>
<svg class="a" style="left:188px;top:433px" width="7" height="14"><rect x="0.5" y="0.5" width="6" height="13" rx="1.5" fill="#b0aab8" stroke="#7a7488" stroke-width="0.8"/><rect x="1.5" y="2.5" width="4" height="5" fill="#48b838"/></svg>
<div class="a" style="left:207px;top:433px">+49 (174) 464789496</div>
<svg class="a" style="left:186px;top:455px" width="13" height="12"><rect x="0.5" y="1.5" width="11.5" height="9.5" fill="#e4e8ec" stroke="#8a9098" stroke-width="0.9"/><path d="M0.5 1.5 L6.25 7 L12 1.5" fill="none" stroke="#8a9098" stroke-width="0.8"/></svg>
<svg class="a" style="left:1104px;top:354px" width="97" height="116" viewBox="0 0 97 116">
<rect width="97" height="116" fill="#fdfdfd"/>
<g filter="url(#pb)">
<path d="M17 96 Q12 50 19 24 Q28 6 44 6 Q62 6 66 24 Q70 50 68 76 L80 84 L40 96Z" fill="#4a3028"/>
<path d="M11 104 L16 88 Q30 76 44 74 L70 70 Q90 80 96 104Z" fill="#242026"/>
<rect x="30" y="56" width="26" height="30" fill="#e6b89e"/>
<path d="M15 84 L26 78 L40 104 L17 104Z" fill="#e48c7e"/>
<path d="M52 68 L68 68 L64 84 L48 104 L40 104Z" fill="#e48c7e"/>
<ellipse cx="43" cy="40" rx="21" ry="25" fill="#f2cab2"/>
<path d="M21 38 Q21 8 44 7 Q66 8 66 38 Q62 20 44 18 Q26 20 21 38Z" fill="#4a3028"/>
<path d="M17 58 Q20 80 26 98 L32 98 Q25 80 24 58Z" fill="#4a3028"/>
<path d="M33 50 Q43 58 53 50 Q43 53 33 50Z" fill="#fff" stroke="#d07a70" stroke-width="1.6"/>
<ellipse cx="34" cy="37" rx="3" ry="1.3" fill="#4a3a3a"/><ellipse cx="52" cy="37" rx="3" ry="1.3" fill="#4a3a3a"/>
</g></svg>
</div>
<div class="a" style="left:647px;top:702px;width:1249px;height:1px;background:#858585"></div>
<div class="a" style="left:633px;top:727px;width:1254px;height:257px;background:#fff;border:1px solid #6a7480;border-right-color:#8a8a8a;border-bottom-color:#8a8a8a"></div>
<div class="a" style="left:634px;top:732px;width:1252px;height:24px;background:#d3d9e0"></div>
<div class="a" style="left:636px;top:720px;width:50px;height:12px;background:#e3e7ee"></div>
<div class="a leg" style="left:638px;top:721px">Info/Notiz</div>
<div class="a" style="left:634px;top:762px;font-size:10.9px">Kunde Inland - Firmenanschrift</div>
<div class="a" style="left:634px;top:775px;font-size:10.9px">3 Ansprechpartner und 3 Lieferadressen</div>
<div class="a" style="left:634px;top:788px;font-size:10.9px">Mit Zahlungskonditionen "Guter Kunde"</div>
<div class="a" style="left:634px;top:801px;font-size:10.9px">30 Tage Netto</div>
<div class="a" style="left:634px;top:814px;font-size:10.9px">Skonto 10 Tage 2%</div>
<div class="a" style="left:634px;top:827px;font-size:10.9px">Skonto 15 Tage 1%</div>
<div class="a" style="left:634px;top:840px;font-size:10.9px">Kein Rabatt</div>

<svg class="a" style="left:638px;top:738px" width="14" height="13"><rect x="1" y="1" width="11.5" height="10.5" fill="none" stroke="#111" stroke-width="1.6"/><rect x="3.8" y="4" width="6" height="4.5" fill="none" stroke="#111" stroke-width="1.3"/></svg>
<svg class="a" style="left:659px;top:736px" width="12" height="16"><path d="M3 1 L8.5 11 M9 1 L3.5 11" stroke="#6a7880" stroke-width="1.3"/><circle cx="3" cy="12.5" r="2.3" fill="none" stroke="#2a50c8" stroke-width="1.5"/><circle cx="9" cy="12.5" r="2.3" fill="none" stroke="#2a50c8" stroke-width="1.5"/></svg>
<svg class="a" style="left:677px;top:736px" width="16" height="17"><path d="M0.5 0.5 H7 L9.5 3 V12 H0.5Z" fill="#e4ecfa" stroke="#8a9ad0" stroke-width="1"/><path d="M5.5 4.5 H12 L15 7.5 V16.5 H5.5Z" fill="#dce6fa" stroke="#8a9ad0" stroke-width="1"/><path d="M7.5 9.5 H13 M7.5 11.5 H13 M7.5 13.5 H13" stroke="#8ab0e8" stroke-width="0.8"/></svg>
<svg class="a" style="left:697px;top:736px" width="16" height="17"><rect x="0.5" y="2.5" width="10" height="13" rx="1" fill="#f8d050" stroke="#d8a830" stroke-width="1"/><rect x="3" y="0.5" width="5" height="3" fill="#c0c0c0" stroke="#808080" stroke-width="0.6"/><path d="M5.5 5.5 H12 L15 8.5 V16.5 H5.5Z" fill="#e4ecfa" stroke="#8a9ad0" stroke-width="1"/><path d="M7.5 10 H13 M7.5 12 H13 M7.5 14 H13" stroke="#8ab0e8" stroke-width="0.8"/></svg>
<svg class="a" style="left:717px;top:736px" width="16" height="17"><rect x="0.5" y="2.5" width="10" height="13" rx="1" fill="#f8d050" stroke="#d8a830" stroke-width="1"/><rect x="3" y="0.5" width="5" height="3" fill="#c0c0c0" stroke="#808080" stroke-width="0.6"/><path d="M5.5 5.5 H12 L15 8.5 V16.5 H5.5Z" fill="#e4ecfa" stroke="#8a9ad0" stroke-width="1"/><path d="M1 6 H10 V8 H7 V16 H4 V8 H1Z" fill="#111"/></svg>
<svg class="a" style="left:738px;top:738px" width="14" height="11"><path d="M3.5 6 Q6 1.5 9.5 2.5 Q12.5 4 11 7.5 Q10 9 8 9.5" stroke="#2a4ab8" stroke-width="1.5" fill="none"/><path d="M0.5 3.5 L6 5.5 L1.5 9.5Z" fill="#2a4ab8"/></svg>
<svg class="a" style="left:757px;top:737px" width="15" height="14"><path d="M0.5 13 L6 1 H9 L14.5 13 H11 L9.8 10 H5.2 L4 13Z M6 7.5 H9 L7.5 3.5Z" fill="#1a2ab0" fill-rule="evenodd"/></svg>
<div class="a" style="left:775px;top:740px;font-size:11px">Zeichen</div>
<svg class="a" style="left:817px;top:737px" width="16" height="16"><path d="M1 12 L6.5 1 H9.5 L15 12 H11.5 L10.3 9 H5.7 L4.5 12Z M6.5 6.5 H9.5 L8 3Z" fill="#1a2ab0" fill-rule="evenodd"/><rect x="0" y="13.5" width="16" height="2.5" fill="#e02020"/></svg>
<svg class="a" style="left:836px;top:743px" width="6" height="4"><path d="M0 0 H5 L2.5 3Z" fill="#333"/></svg>
<svg class="a" style="left:845px;top:735px" width="19" height="18"><circle cx="12.5" cy="6" r="5" fill="#dde8ee" stroke="#6a7a7a" stroke-width="1.6"/><path d="M9 9.5 L2 16.5" stroke="#a87830" stroke-width="2.6"/></svg>
<svg class="a" style="left:867px;top:736px" width="15" height="15"><path d="M0 1.5H14M0 4H9M0 6.5H14M0 9H9M0 11.5H14M0 14H9" stroke="#2a4a88" stroke-width="1.3"/></svg>
<svg class="a" style="left:887px;top:736px" width="15" height="15"><path d="M0 1.5H14M3 4H11M0 6.5H14M3 9H11M0 11.5H14M3 14H11" stroke="#2a4a88" stroke-width="1.3"/><path d="M7 0V15" stroke="#2a4a88" stroke-width="0.6" opacity="0.6"/></svg>
<svg class="a" style="left:907px;top:736px" width="15" height="15"><path d="M0 1.5H14M5 4H14M0 6.5H14M5 9H14M0 11.5H14M5 14H14" stroke="#2a4a88" stroke-width="1.3"/></svg>
<div class="a" style="left:930px;top:738px;font-family:'Liberation Serif';font-weight:bold;font-size:13px">F</div>
<div class="a" style="left:948px;top:738px;font-family:'Liberation Serif';font-weight:bold;font-style:italic;font-size:13px">K</div>
<div class="a" style="left:970px;top:738px;font-family:'Liberation Serif';font-weight:bold;font-size:12px;text-decoration:underline">U</div>
<svg class="a" style="left:986px;top:736px" width="16" height="16"><rect x="0.8" y="1.8" width="13" height="13" rx="1" fill="#fff" stroke="#1a88e8" stroke-width="1.6"/><path d="M5 11 L13 3 L15 5 L7 13 L4.5 13.5Z" fill="#88d048" stroke="#4a8a20" stroke-width="0.7"/><path d="M13 3 L14.2 1.8 L16 3.6 L15 5Z" fill="#e86060"/></svg>


<svg class="a" style="left:1755px;top:1010px" width="18" height="13"><path d="M1 5 Q2 2 6 3 L14 5 Q17 6 17 9 Q16 11 12 11 L4 10 Q1 9 1 5Z" fill="#c8c8f0" stroke="#8a8aa8" stroke-width="0.8"/><path d="M4 6.5 H13 M5 8.5 H12" stroke="#fff" stroke-width="0.9" stroke-dasharray="1 1"/><path d="M3 4 Q5 0 8 2" stroke="#9a9ab8" stroke-width="0.8" fill="none"/></svg>
<svg class="a" style="left:1776px;top:1008px" width="17" height="16"><circle cx="5.5" cy="4.5" r="3.5" fill="#9aa0a8"/><path d="M0.5 14 Q0.5 8 5.5 8 Q10.5 8 10.5 14Z" fill="#4a6ac8"/><path d="M11 0.5V6M8.5 3.2H13.5" stroke="#1a2a5a" stroke-width="1.6"/><path d="M6 15 L14 7 L16 9 L8 15.5Z" fill="#f0c840" stroke="#5a4a20" stroke-width="0.6"/><rect x="6" y="13" width="10" height="2.8" fill="#b8c8e8" stroke="#3a5a98" stroke-width="0.6"/></svg>
<svg class="a" style="left:1797px;top:1008px" width="13" height="16"><rect x="0.5" y="0.5" width="11" height="15" rx="1" fill="#a8c4f0" stroke="#6a8ac8" stroke-width="0.8"/><rect x="2" y="2" width="8" height="3" fill="#d8e8fc"/><path d="M3 7.5h1.5M6 7.5h1.5M3 10h1.5M6 10h1.5M3 12.5h1.5M6 12.5h1.5" stroke="#5a7ab8" stroke-width="1.2"/><rect x="8.5" y="7" width="1.8" height="1.8" fill="#f09040"/></svg>
<svg class="a" style="left:1816px;top:1008px" width="16" height="15"><rect x="9.5" y="0.5" width="5.5" height="5.5" fill="#d8e0e8" stroke="#60707a" stroke-width="1"/><rect x="0.5" y="8.5" width="5.5" height="5.5" fill="#d8e0e8" stroke="#60707a" stroke-width="1"/><rect x="3" y="2.5" width="9.5" height="9.5" fill="#3a88d8" stroke="#1a4a90" stroke-width="1.2"/></svg>
<svg class="a" style="left:1836px;top:1009px" width="16" height="13"><rect x="0.5" y="0.5" width="15" height="12" fill="#eef2fa" stroke="#3a5a98" stroke-width="1"/><rect x="0.5" y="0.5" width="15" height="2.2" fill="#3a6ad8"/><rect x="0.5" y="0.5" width="3" height="12" fill="#fff" stroke="#3a5a98" stroke-width="0.7"/><path d="M5 7 H14 M5 7 L7 5.5 M5 7 L7 8.5 M14 7 L12 5.5 M14 7 L12 8.5" stroke="#222" stroke-width="0.9"/></svg>
<svg class="a" style="left:1856px;top:1008px" width="16" height="15"><rect x="0.5" y="2" width="15" height="12.5" fill="#fff" stroke="#3a5a98" stroke-width="1"/><rect x="0.5" y="2" width="15" height="2.5" fill="#3a6ad8"/><path d="M1 1H15" stroke="#333" stroke-width="1" stroke-dasharray="1 1"/><path d="M1 7h14M1 9.5h14M1 12h14M4 4.5v10M7.5 4.5v10M11 4.5v10" stroke="#4a7ad0" stroke-width="0.8"/><rect x="10.5" y="8.5" width="3" height="3" fill="none" stroke="#e84a2a" stroke-width="1"/></svg>
<svg class="a" style="left:1876px;top:1009px" width="16" height="14"><rect x="0.5" y="0.5" width="15" height="12" fill="#0a0a10" stroke="#1a3a7a" stroke-width="1"/><rect x="0.5" y="0.5" width="15" height="1.8" fill="#2a5ad8"/><path d="M5 3 V12 L7.3 10 L9 14 L10.5 13.3 L8.8 9.5 L11.5 9.5Z" fill="#fff" stroke="#444" stroke-width="0.5"/></svg>

<!--/MAIN-->

<!-- status bar -->
<div class="a" style="left:15px;top:1006px;width:1888px;height:20px;border:1px solid #7fbcbc"></div>
<div class="a" style="left:203px;top:1006px;width:1px;height:20px;background:#7fbcbc"></div>
<div class="a" style="left:1744px;top:1006px;width:1px;height:20px;background:#7fbcbc"></div>
<div class="a" style="left:20px;top:1011px">16 Elemente</div>
<div class="a" style="left:216px;top:1011px">Hundeschule Berngrüner/10000</div>

</body></html>
